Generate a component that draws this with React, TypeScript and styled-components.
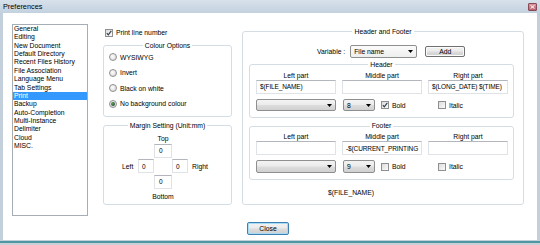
import React from 'react'
import styled, { createGlobalStyle } from 'styled-components'

const GlobalStyle = createGlobalStyle`
	html, body {
		margin: 0;
		padding: 0;
	}
	body {
		width: 540px;
		height: 245px;
		overflow: hidden;
		background: #c9d0d6;
		font-family: 'Liberation Sans', Arial, sans-serif;
		font-size: 6.8px;
		color: #000;
	}
`

const Window = styled.div`
	width: 540px;
	height: 243px;
	box-sizing: border-box;
	display: flex;
	flex-direction: column;
	background: #c3cfdb;
	border-bottom: 2px solid #4f97a3;
`
const TitleBar = styled.div`
	height: 13px;
	flex: none;
	display: flex;
	align-items: center;
	justify-content: space-between;
	padding: 0 3px;
	background: linear-gradient(#d7e1eb, #c3d1df);
	font-size: 7.3px;
`
const CloseX = styled.div`
	width: 9px;
	height: 8px;
	box-sizing: border-box;
	border: 1px solid #8c4a55;
	border-radius: 1px;
	background: linear-gradient(#d99aa2, #b8606c);
	display: flex;
	align-items: center;
	justify-content: center;
	margin-top: 1px;
`
const Client = styled.div`
	flex: 1;
	margin: 0 3px 1px;
	background: #fff;
	display: flex;
	flex-direction: column;
	padding: 11px 9px 0;
`
const Content = styled.div`
	display: flex;
	align-items: flex-start;
`
const ListBox = styled.ul`
	width: 76px;
	height: 192px;
	box-sizing: border-box;
	margin: 0;
	padding: 0;
	list-style: none;
	border: 1px solid #a7adb5;
`
const ListItem = styled.li<{ $selected?: boolean }>`
	height: 8.37px;
	line-height: 8.37px;
	padding-left: 1px;
	white-space: nowrap;
	background: ${({ $selected }) => ($selected ? '#3399ff' : 'transparent')};
	color: ${({ $selected }) => ($selected ? '#fff' : '#000')};
`
const LeftColumn = styled.div`
	width: 129px;
	margin-left: 15px;
	padding-top: 4px;
	display: flex;
	flex-direction: column;
`
const CheckRow = styled.label<{ $indent?: number }>`
	display: flex;
	align-items: center;
	gap: 3px;
	height: 9px;
	padding-left: ${({ $indent }) => $indent ?? 0}px;
	white-space: nowrap;
`
const Box = styled.span`
	width: 8px;
	height: 8px;
	box-sizing: border-box;
	flex: none;
	border: 1px solid #8e8f8f;
	background: linear-gradient(135deg, #dcdcdc, #fbfbfb);
	display: flex;
	align-items: center;
	justify-content: center;
`
const RadioDot = styled.span<{ $on?: boolean }>`
	width: 8px;
	height: 8px;
	box-sizing: border-box;
	flex: none;
	border-radius: 50%;
	border: 1px solid #8e8f8f;
	background: radial-gradient(circle at 40% 40%, #fdfdfd, #d2d2d2);
	display: flex;
	align-items: center;
	justify-content: center;
	&::after {
		content: '';
		display: ${({ $on }) => ($on ? 'block' : 'none')};
		width: 4px;
		height: 4px;
		border-radius: 50%;
		background: radial-gradient(circle at 40% 40%, #5f9a5f, #17361c);
	}
`
const GroupBox = styled.fieldset<{ $height: number; $top: number }>`
	margin: ${({ $top }) => $top}px 0 0;
	padding: 0;
	min-width: 0;
	height: ${({ $height }) => $height}px;
	box-sizing: border-box;
	border: 1px solid #d5dde4;
	border-radius: 3px;
`
const Legend = styled.legend`
	margin: 0 auto;
	padding: 0 2px;
	line-height: 8px;
`
const RadioList = styled.div`
	display: flex;
	flex-direction: column;
	padding-left: 5px;
`
const RadioRow = styled.label`
	display: flex;
	align-items: center;
	gap: 3px;
	height: 15.5px;
`
const MarginGrid = styled.div`
	display: grid;
	grid-template-columns: 16px 16px 18px 16px auto;
	grid-template-rows: 11px 14px 17px 15px 13px;
	padding: 3.3px 0 0 18px;
`
const Cell = styled.div<{ $row: number; $col: number; $justify?: string; $pad?: number }>`
	grid-row: ${({ $row }) => $row};
	grid-column: ${({ $col }) => $col};
	display: flex;
	align-items: ${({ $row }) => ($row === 4 ? 'flex-start' : 'center')};
	justify-content: ${({ $justify }) => $justify ?? 'center'};
	padding-left: ${({ $pad }) => $pad ?? 0}px;
`
const TextBox = styled.div<{ $pad?: number }>`
	width: 100%;
	height: 14px;
	box-sizing: border-box;
	border: 1px solid #dfe3e8;
	border-top-color: #b3b7bd;
	background: #fff;
	padding-left: ${({ $pad }) => $pad ?? 3}px;
	display: flex;
	align-items: center;
	white-space: nowrap;
	overflow: hidden;
	font-size: 6.5px;
	letter-spacing: -0.12px;
`
const HFGroup = styled(GroupBox)`
	width: 282px;
	margin-left: 10px;
`
const VariableRow = styled.div`
	display: flex;
	align-items: center;
	height: 13px;
	margin-top: 9.3px;
	padding-left: 74px;
`
const VarLabel = styled.span`
	margin-right: 5px;
`
const Combo = styled.div<{ $w: number; $h?: number; $flat?: boolean; $empty?: boolean }>`
	width: ${({ $w }) => $w}px;
	height: ${({ $h }) => $h ?? 12.5}px;
	box-sizing: border-box;
	flex: none;
	display: flex;
	align-items: center;
	justify-content: ${({ $empty }) => ($empty ? 'flex-end' : 'space-between')};
	padding: 0 3px;
	border: 1px solid #8e8f8f;
	border-radius: 2px;
	background: ${({ $flat }) =>
		$flat
			? 'linear-gradient(#fbfbfb, #eeeeee)'
			: 'linear-gradient(#f3f3f3 0%, #ebebeb 48%, #dddddd 52%, #d0d0d0 100%)'};
`
const PushButton = styled.button<{ $w: number; $h: number; $default?: boolean }>`
	width: ${({ $w }) => $w}px;
	height: ${({ $h }) => $h}px;
	box-sizing: border-box;
	padding: 0;
	font: inherit;
	color: #000;
	border: 1px solid ${({ $default }) => ($default ? '#3c7fb1' : '#707070')};
	border-radius: 2px;
	background: linear-gradient(#f2f2f2 0%, #ebebeb 48%, #dddddd 52%, #cfcfcf 100%);
	box-shadow: ${({ $default }) => ($default ? 'inset 0 0 0 1px #a6dcf5' : 'inset 0 0 0 1px #fbfbfb')};
`
const AddButton = styled(PushButton)`
	margin-left: 8px;
`
const SubGroup = styled(GroupBox)`
	margin-left: 6px;
	margin-right: 9px;
`
const PartGrid = styled.div<{ $h: number; $top?: number }>`
	display: grid;
	grid-template-columns: repeat(3, 80px);
	column-gap: 6px;
	height: ${({ $h }) => $h}px;
	margin-top: ${({ $top }) => $top ?? 0}px;
	padding-left: 6px;
`
const PartLabel = styled.span`
	line-height: 8px;
	text-align: center;
`
const FormatCell = styled.div<{ $indent?: number }>`
	display: flex;
	align-items: center;
	gap: 6px;
	padding-left: ${({ $indent }) => $indent ?? 0}px;
`
const FileNameText = styled.div`
	margin-top: 8.7px;
	padding-left: 85px;
	line-height: 8px;
`
const Footer = styled.div`
	display: flex;
	justify-content: center;
	padding-right: 4px;
	margin-top: 6px;
`

const Arrow = () => (
	<svg width="5" height="3" viewBox="0 0 5 3">
		<path d="M0 0h5L2.5 3z" fill="#000" />
	</svg>
)

const Check = ({ checked, label, indent }: { checked?: boolean; label: string; indent?: number }) => (
	<CheckRow $indent={indent}>
		<Box>
			{checked && (
				<svg width="6" height="6" viewBox="0 0 6 6">
					<path d="M0.8 3.2L2.3 4.8L5.3 0.8" fill="none" stroke="#2d3b4a" strokeWidth="1.1" />
				</svg>
			)}
		</Box>
		{label}
	</CheckRow>
)

const Radio = ({ on, label }: { on?: boolean; label: string }) => (
	<RadioRow>
		<RadioDot $on={on} />
		{label}
	</RadioRow>
)

const pages = [
	'General',
	'Editing',
	'New Document',
	'Default Directory',
	'Recent Files History',
	'File Association',
	'Language Menu',
	'Tab Settings',
	'Print',
	'Backup',
	'Auto-Completion',
	'Multi-Instance',
	'Delimiter',
	'Cloud',
	'MISC.',
]

type Part = { left: string; middle: string; right: string; size: string; bold: boolean; italic: boolean }

const PartGroup = ({ title, part, top }: { title: string; part: Part; top: number }) => (
	<SubGroup $height={57.5} $top={top}>
		<Legend>{title}</Legend>
		<PartGrid $h={8} $top={3}>
			<PartLabel>Left part</PartLabel>
			<PartLabel>Middle part</PartLabel>
			<PartLabel>Right part</PartLabel>
		</PartGrid>
		<PartGrid $h={15}>
			<TextBox>{part.left}</TextBox>
			<TextBox>{part.middle}</TextBox>
			<TextBox>{part.right}</TextBox>
		</PartGrid>
		<PartGrid $h={12.5} $top={4}>
			<FormatCell>
				<Combo $w={80} $empty>
					<Arrow />
				</Combo>
			</FormatCell>
			<FormatCell $indent={1}>
				<Combo $w={32}>
					{part.size}
					<Arrow />
				</Combo>
				<Check checked={part.bold} label="Bold" />
			</FormatCell>
			<FormatCell $indent={10}>
				<Check checked={part.italic} label="Italic" />
			</FormatCell>
		</PartGrid>
	</SubGroup>
)

const header: Part = {
	left: '$(FILE_NAME)',
	middle: '',
	right: '$(LONG_DATE) $(TIME)',
	size: '8',
	bold: true,
	italic: false,
}
const footer: Part = {
	left: '',
	middle: '-$(CURRENT_PRINTING',
	right: '',
	size: '9',
	bold: false,
	italic: false,
}

const App = () => (
	<>
		<GlobalStyle />
		<Window>
			<TitleBar>
				<span>Preferences</span>
				<CloseX>
					<svg width="5" height="4" viewBox="0 0 5 4">
						<path d="M0.5 0.3L4.5 3.7M4.5 0.3L0.5 3.7" stroke="#fff" strokeWidth="1" />
					</svg>
				</CloseX>
			</TitleBar>
			<Client>
				<Content>
					<ListBox>
						{pages.map((p) => (
							<ListItem key={p} $selected={p === 'Print'}>
								{p}
							</ListItem>
						))}
					</ListBox>
					<LeftColumn>
						<Check checked label="Print line number" indent={2} />
						<GroupBox $height={75.5} $top={4.5}>
							<Legend>Colour Options</Legend>
							<RadioList>
								<Radio label="WYSIWYG" />
								<Radio label="Invert" />
								<Radio label="Black on white" />
								<Radio on label="No background colour" />
							</RadioList>
						</GroupBox>
						<GroupBox $height={83.3} $top={4.7}>
							<Legend>Margin Setting (Unit:mm)</Legend>
							<MarginGrid>
								<Cell $row={1} $col={3}>Top</Cell>
								<Cell $row={2} $col={3}>
									<TextBox $pad={4}>0</TextBox>
								</Cell>
								<Cell $row={3} $col={1} $justify="flex-start">Left</Cell>
								<Cell $row={3} $col={2}>
									<TextBox>0</TextBox>
								</Cell>
								<Cell $row={3} $col={4}>
									<TextBox>0</TextBox>
								</Cell>
								<Cell $row={3} $col={5} $justify="flex-start" $pad={4}>
									Right
								</Cell>
								<Cell $row={4} $col={3}>
									<TextBox $pad={4}>0</TextBox>
								</Cell>
								<Cell $row={5} $col={3}>Bottom</Cell>
							</MarginGrid>
						</GroupBox>
					</LeftColumn>
					<HFGroup $height={177.5} $top={3.7}>
						<Legend>Header and Footer</Legend>
						<VariableRow>
							<VarLabel>Variable :</VarLabel>
							<Combo $w={67} $h={13} $flat>
								File name
								<Arrow />
							</Combo>
							<AddButton $w={40} $h={11}>Add</AddButton>
						</VariableRow>
						<PartGroup title="Header" part={header} top={3} />
						<PartGroup title="Footer" part={footer} top={4} />
						<FileNameText>$(FILE_NAME)</FileNameText>
					</HFGroup>
				</Content>
				<Footer>
					<PushButton $w={42} $h={13} $default>
						Close
					</PushButton>
				</Footer>
			</Client>
		</Window>
	</>
)

export default App
